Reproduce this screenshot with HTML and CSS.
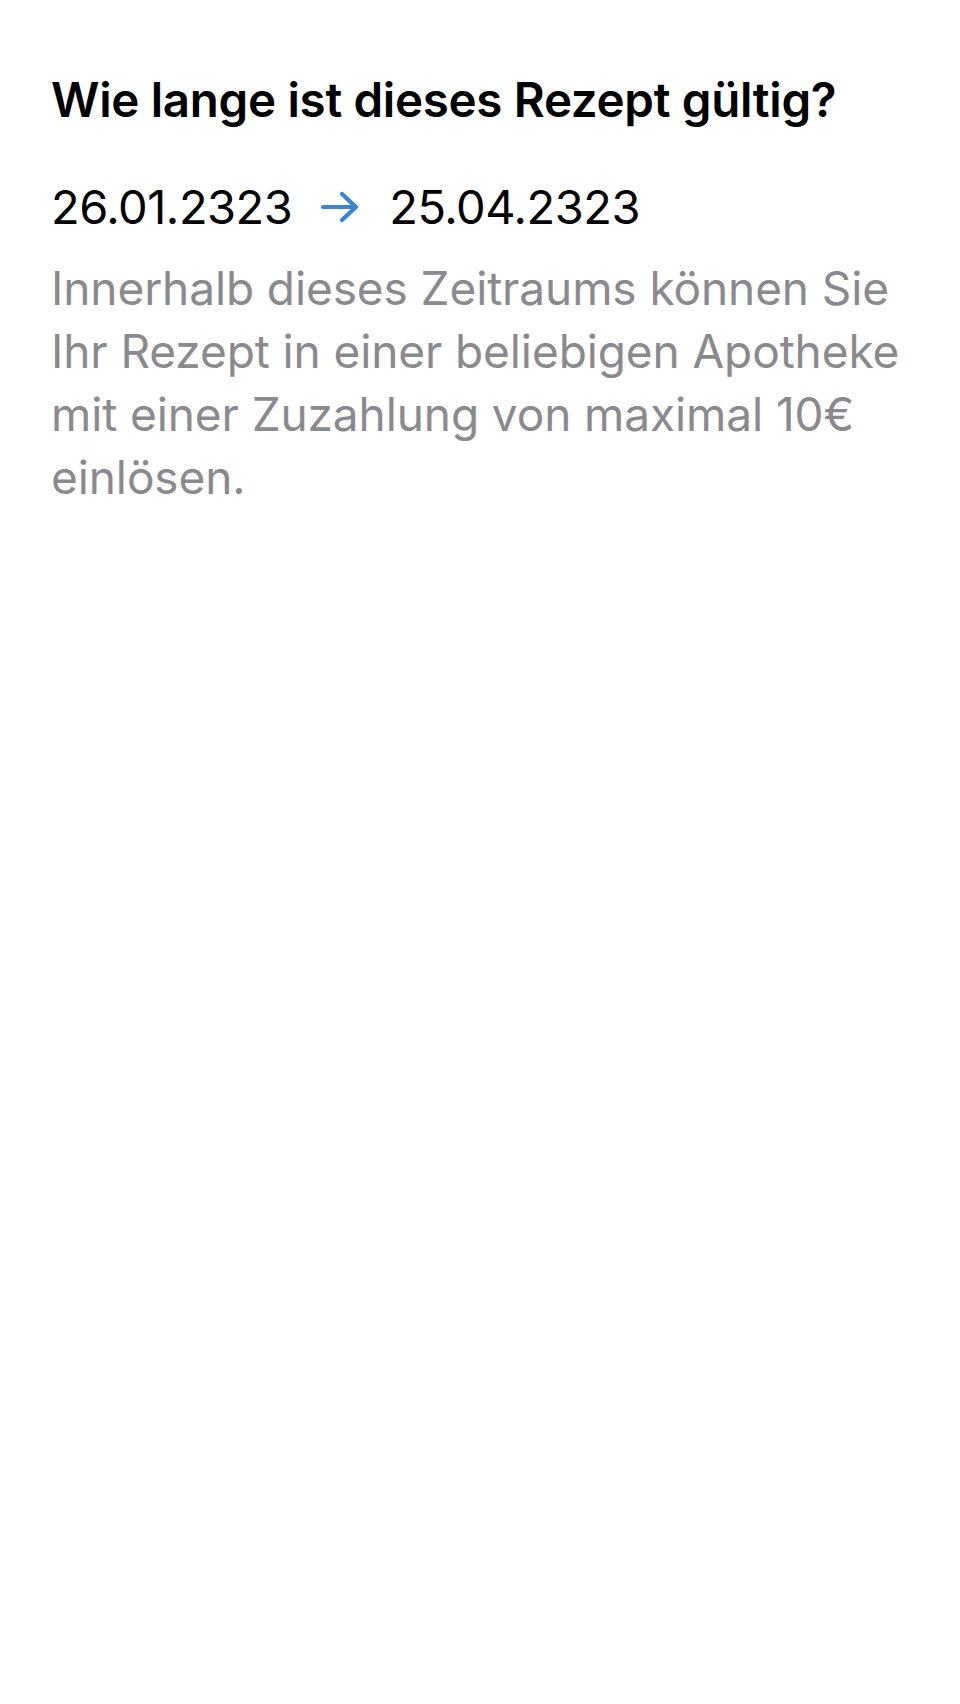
FILE: index.html
```html
<!DOCTYPE html>
<html lang="de">
<head>
<meta charset="utf-8">
<link rel="stylesheet" href="styles.css">
</head>
<body>
<main class="sheet">
  <h1 class="title">Wie lange ist dieses Rezept gültig?</h1>
  <div class="dates">
    <span class="date">26.01.2323</span>
    <svg class="arrow" viewBox="0 0 40 32" width="40" height="32" aria-hidden="true">
      <path d="M3 16 H36 M22 3 L36 16 L22 29" fill="none" stroke="#3a84d8" stroke-width="4.2" stroke-linecap="round" stroke-linejoin="round"/>
    </svg>
    <span class="date">25.04.2323</span>
  </div>
  <p class="info">Innerhalb dieses Zeitraums können Sie Ihr Rezept in einer beliebigen Apotheke mit einer Zuzahlung von maximal 10€ einlösen.</p>
</main>
</body>
</html>
```

FILE: styles.css
```css
html, body {
  margin: 0;
  padding: 0;
  background: #ffffff;
}
body {
  font-family: Inter, "Noto Sans", "Liberation Sans", sans-serif;
  width: 960px;
  min-height: 1704px;
}
.sheet {
  padding: 70px 30px 0 51px;
}
.title {
  margin: 0;
  font-size: 47.5px;
  line-height: 60px;
  font-weight: 600;
  color: #000000;
  letter-spacing: -0.3px;
}
.dates {
  display: flex;
  align-items: center;
  margin-top: 47px;
  height: 60px;
}
.date {
  font-size: 47px;
  line-height: 60px;
  font-weight: 400;
  color: #000000;
  letter-spacing: -0.5px;
}
.arrow {
  margin: 0 29px 0 28px;
  flex: none;
}
.info {
  margin: 20px 0 0 0;
  font-size: 46px;
  line-height: 63px;
  color: #8a8a8e;
  letter-spacing: -0.1px;
}
```
